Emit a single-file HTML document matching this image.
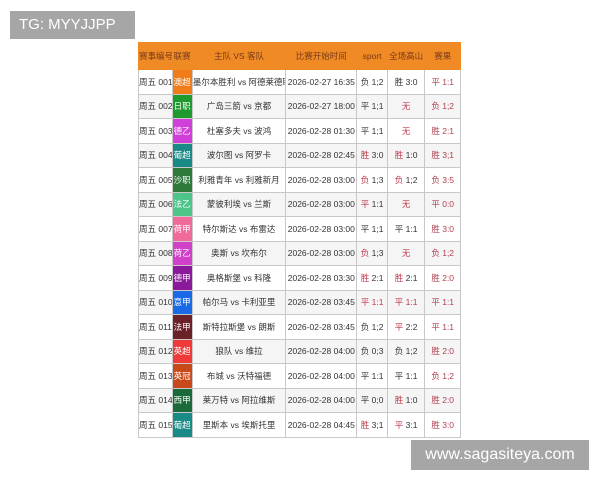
<!DOCTYPE html>
<html><head><meta charset="utf-8"><style>
body{margin:0;width:600px;height:480px;background:#fff;position:relative;overflow:hidden;font-family:"Liberation Sans","Noto Sans CJK SC",sans-serif;}
.tg{position:absolute;left:10px;top:11px;width:125px;height:28px;background:#a6a6a6;color:#fff;font-size:15px;line-height:28px;text-indent:9px;}
.wm{position:absolute;left:411px;top:440px;width:178px;height:30px;background:#a6a6a6;color:#fff;font-size:16px;line-height:30px;text-align:center;}
table{position:absolute;left:138px;top:42px;border-collapse:collapse;table-layout:fixed;font-size:8.5px;color:#333;width:323px;}
td,th{border:1px solid #c8c8c8;padding:0;text-align:center;white-space:nowrap;overflow:hidden;}
th{background:#f08a24;color:#7a3a1a;font-weight:normal;height:26px;border-color:#f08a24;}
td{height:23.5px;}
tr:nth-child(odd) td{background:#f5f5f5}
td.l{color:#fff}
.r{color:#c0394a}
td.res{color:#b04050}
td.id{text-align:left;padding-left:0}
</style></head><body>
<div class="tg">TG: MYYJJPP</div>
<table>
<colgroup><col style="width:33px"><col style="width:20px"><col style="width:92px"><col style="width:70px"><col style="width:30px"><col style="width:37px"><col style="width:35px"></colgroup>
<tr><th>赛事编号</th><th>联赛</th><th>主队 VS 客队</th><th>比赛开始时间</th><th>sport</th><th>全场高山</th><th>赛果</th></tr>
<tr><td class="id">周五 001</td><td class="l" style="background:#f07d1a">澳超</td><td>墨尔本胜利 vs 阿德莱德联</td><td>2026-02-27 16:35</td><td>负 1;2</td><td>胜 3:0</td><td class="res">平 1:1</td></tr>
<tr><td class="id">周五 002</td><td class="l" style="background:#1e9a2e">日职</td><td>广岛三箭 vs 京都</td><td>2026-02-27 18:00</td><td>平 1;1</td><td class="r">无</td><td class="res">负 1;2</td></tr>
<tr><td class="id">周五 003</td><td class="l" style="background:#d040d8">德乙</td><td>杜塞多夫 vs 波鸿</td><td>2026-02-28 01:30</td><td>平 1;1</td><td class="r">无</td><td class="res">胜 2:1</td></tr>
<tr><td class="id">周五 004</td><td class="l" style="background:#1a8a86">葡超</td><td>波尔图 vs 阿罗卡</td><td>2026-02-28 02:45</td><td><span class="r">胜</span> 3:0</td><td><span class="r">胜</span> 1:0</td><td class="res">胜 3;1</td></tr>
<tr><td class="id">周五 005</td><td class="l" style="background:#2e7a3a">沙职</td><td>利雅青年 vs 利雅新月</td><td>2026-02-28 03:00</td><td><span class="r">负</span> 1;3</td><td><span class="r">负</span> 1;2</td><td class="res">负 3:5</td></tr>
<tr><td class="id">周五 006</td><td class="l" style="background:#4cc48a">法乙</td><td>蒙彼利埃 vs 兰斯</td><td>2026-02-28 03:00</td><td><span class="r">平</span> 1:1</td><td class="r">无</td><td class="res">平 0:0</td></tr>
<tr><td class="id">周五 007</td><td class="l" style="background:#f06a9a">荷甲</td><td>特尔斯达 vs 布雷达</td><td>2026-02-28 03:00</td><td>平 1;1</td><td>平 1:1</td><td class="res">胜 3:0</td></tr>
<tr><td class="id">周五 008</td><td class="l" style="background:#d040c8">荷乙</td><td>奥斯 vs 坎布尔</td><td>2026-02-28 03:00</td><td><span class="r">负</span> 1;3</td><td class="r">无</td><td class="res">负 1;2</td></tr>
<tr><td class="id">周五 009</td><td class="l" style="background:#8a1a9a">德甲</td><td>奥格斯堡 vs 科隆</td><td>2026-02-28 03:30</td><td><span class="r">胜</span> 2:1</td><td><span class="r">胜</span> 2:1</td><td class="res">胜 2:0</td></tr>
<tr><td class="id">周五 010</td><td class="l" style="background:#1a6ae8">意甲</td><td>帕尔马 vs 卡利亚里</td><td>2026-02-28 03:45</td><td class="r">平 1:1</td><td class="r">平 1:1</td><td class="res">平 1:1</td></tr>
<tr><td class="id">周五 011</td><td class="l" style="background:#6a2228">法甲</td><td>斯特拉斯堡 vs 朗斯</td><td>2026-02-28 03:45</td><td>负 1;2</td><td><span class="r">平</span> 2:2</td><td class="res">平 1:1</td></tr>
<tr><td class="id">周五 012</td><td class="l" style="background:#f03a3a">英超</td><td>狼队 vs 维拉</td><td>2026-02-28 04:00</td><td>负 0;3</td><td>负 1;2</td><td class="res">胜 2:0</td></tr>
<tr><td class="id">周五 013</td><td class="l" style="background:#c84a1a">英冠</td><td>布城 vs 沃特福德</td><td>2026-02-28 04:00</td><td>平 1:1</td><td>平 1:1</td><td class="res">负 1;2</td></tr>
<tr><td class="id">周五 014</td><td class="l" style="background:#1a6a3a">西甲</td><td>莱万特 vs 阿拉维斯</td><td>2026-02-28 04:00</td><td>平 0;0</td><td><span class="r">胜</span> 1:0</td><td class="res">胜 2:0</td></tr>
<tr><td class="id">周五 015</td><td class="l" style="background:#1a8a86">葡超</td><td>里斯本 vs 埃斯托里</td><td>2026-02-28 04:45</td><td><span class="r">胜</span> 3;1</td><td><span class="r">平</span> 3:1</td><td class="res">胜 3:0</td></tr>
</table>
<div class="wm">www.sagasiteya.com</div>
</body></html>
